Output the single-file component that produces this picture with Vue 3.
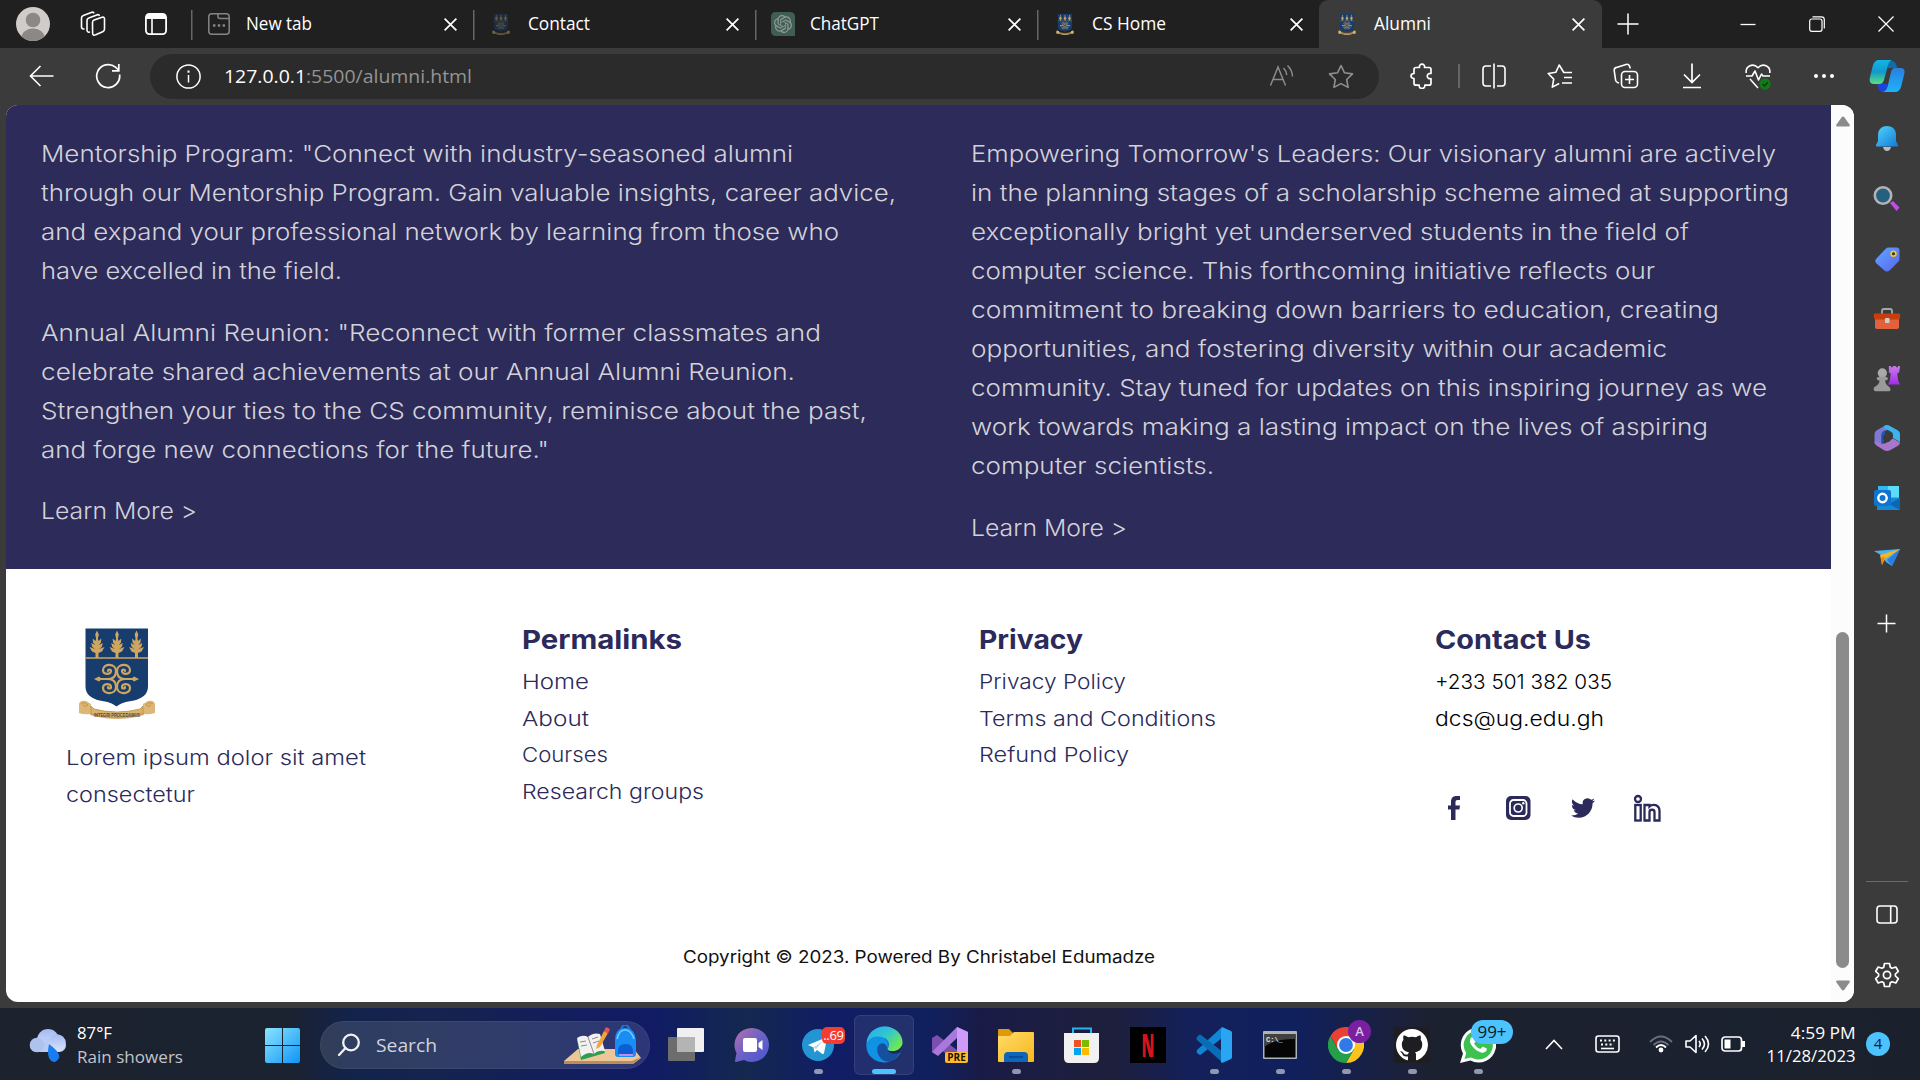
<script setup>
// Stretches a line of text horizontally to the given width in pixels.
const vFit = {
  mounted(el, { value }) {
    const w = el.getBoundingClientRect().width
    if (w) el.style.transform = `scaleX(${value / w})`
  }
}

const tabs = [
  { title: 'New tab', w: 66, icon: 'page' },
  { title: 'Contact', w: 62, icon: 'crest', dim: true },
  { title: 'ChatGPT', w: 69, icon: 'gpt' },
  { title: 'CS Home', w: 74, icon: 'crest' },
  { title: 'Alumni', w: 57, icon: 'crest', active: true }
]

const mentorship = [
  ['Mentorship Program: "Connect with industry-seasoned alumni', 752],
  ['through our Mentorship Program. Gain valuable insights, career advice,', 855],
  ['and expand your professional network by learning from those who', 798],
  ['have excelled in the field.', 301]
]
const reunion = [
  ['Annual Alumni Reunion: "Reconnect with former classmates and', 780],
  ['celebrate shared achievements at our Annual Alumni Reunion.', 754],
  ['Strengthen your ties to the CS community, reminisce about the past,', 826],
  ['and forge new connections for the future."', 508]
]
const leaders = [
  ["Empowering Tomorrow's Leaders: Our visionary alumni are actively", 805],
  ['in the planning stages of a scholarship scheme aimed at supporting', 818],
  ['exceptionally bright yet underserved students in the field of', 718],
  ['computer science. This forthcoming initiative reflects our', 684],
  ['commitment to breaking down barriers to education, creating', 748],
  ['opportunities, and fostering diversity within our academic', 696],
  ['community. Stay tuned for updates on this inspiring journey as we', 796],
  ['work towards making a lasting impact on the lives of aspiring', 737],
  ['computer scientists.', 243]
]
const columns = [
  { head: 'Permalinks', w: 160, links: [['Home', 67], ['About', 67], ['Courses', 86], ['Research groups', 182]] },
  { head: 'Privacy', w: 104, links: [['Privacy Policy', 147], ['Terms and Conditions', 237], ['Refund Policy', 150]] }
]
</script>

<template>
  <div class="desktop">
    <svg class="defs" width="0" height="0" aria-hidden="true">
      <defs>
        <symbol id="crest" viewBox="0 0 76 92">
          <path d="M6.500 0.500h62.500v58c0 8-6 12-14 14-8 1-14 3-17.500 6-3.500-3-9-5-17-6-8-2-14-6-14-14z" fill="#163d6e" />
          <path d="M6.500 30h62.500" stroke="#cfa65f" stroke-width="1.400" />
          <g v-for="x in [18, 38, 57.500]" :key="x" :transform="`translate(${x} 0)`" fill="#cfa65f">
            <path d="M0 2.500l1.800 4-.9 4 .6 2.500 2.800-2.500-.3 4-2.200 2.500 4-2-1 4-2.800 2 5.500-2-2.500 4.500-3.500 1.500v5h-3v-5l-3.500-1.500-2.500-4.500 5.500 2-2.800-2-1-4 4 2-2.200-2.500-.3-4 2.800 2.500.6-2.500-.9-4z" />
          </g>
          <g fill="none" stroke="#cfa65f" stroke-width="2.200" stroke-linecap="round">
            <path d="M18 51h11c6 0 8-4 8-8 0-8-13-8-13-1 0 5 8 5 8 1 0-2-3-2-3 0" />
            <path d="M57 51h-11c-6 0-8-4-8-8 0-8 13-8 13-1 0 5-8 5-8 1 0-2 3-2 3 0" />
            <path d="M18 51h11c6 0 8 4 8 8 0 8-13 8-13 1 0-5 8-5 8-1 0 2-3 2-3 0" />
            <path d="M57 51h-11c-6 0-8 4-8 8 0 8 13 8 13 1 0-5-8-5-8-1 0 2 3 2 3 0" />
          </g>
          <path d="M15 51l5-2.500 3 2.500-3 2.500zM60 51l-5-2.500-3 2.500 3 2.500z" fill="#cfa65f" />
          <path d="M0 76q1-4 7-3l5 3v9q16 3 26 3t26-3v-9l5-3q6-1 7 3v9q-6 2-11 1v1q-13 4-27 4t-27-4v-1q-6 1-11-1z" fill="#dcb775" />
          <path d="M7 79h5v-3l7 4q18 4 38 0l7-4v3h5" fill="none" stroke="#fff" stroke-width="0" />
          <path d="M2 76q4-3 7 1-3 3-5 0M74 76q-4-3-7 1 3 3 5 0M12 78l3 3q23 6 46 0l3-3v8q-26 7-52 0z" fill="#d9b26c" stroke="#b98f4c" stroke-width=".8" />
          <text x="38" y="88.500" text-anchor="middle" font-family="Liberation Sans, sans-serif" font-weight="700" font-size="5.800" textLength="46" lengthAdjust="spacingAndGlyphs" fill="#4b4a4d">INTEGRI PROCEDAMUS</text>
        </symbol>
        <linearGradient id="gBlue" x1="0" y1="0" x2="1" y2="1"><stop stop-color="#4fd5fb" /><stop offset="1" stop-color="#1479d8" /></linearGradient>
        <linearGradient id="gTeal" x1="0" y1="0" x2="0" y2="1"><stop stop-color="#12b5e8" /><stop offset=".5" stop-color="#1199c9" /><stop offset="1" stop-color="#5fe07c" /></linearGradient>
        <linearGradient id="gSky" x1="0" y1="0" x2="0" y2="1"><stop stop-color="#2a7fe0" /><stop offset="1" stop-color="#1db4fb" /></linearGradient>
        <linearGradient id="gTag" x1="0" y1="0" x2="1" y2="1"><stop stop-color="#5fa8ff" /><stop offset="1" stop-color="#5a63f0" /></linearGradient>
        <linearGradient id="gWin" x1="0" y1="0" x2="1" y2="1"><stop stop-color="#8be4ff" /><stop offset="1" stop-color="#0f95f5" /></linearGradient>
        <linearGradient id="gChat" x1="0" y1="0" x2="1" y2="1"><stop stop-color="#b86fae" /><stop offset=".5" stop-color="#6a62c4" /><stop offset="1" stop-color="#4b55d4" /></linearGradient>
        <linearGradient id="gEdge" x1="0" y1="0" x2="1" y2=".7"><stop stop-color="#2ea9f0" /><stop offset=".5" stop-color="#2fc5d2" /><stop offset="1" stop-color="#74ea48" /></linearGradient>
        <linearGradient id="gFold" x1="0" y1="0" x2="1" y2="1"><stop stop-color="#ffdb69" /><stop offset="1" stop-color="#f9b71c" /></linearGradient>
        <linearGradient id="gPurp" x1="0" y1="0" x2="0" y2="1"><stop stop-color="#c97be8" /><stop offset="1" stop-color="#a22be8" /></linearGradient>
        <linearGradient id="gCloud" x1="0" y1="0" x2="0" y2="1"><stop stop-color="#a3baf4" /><stop offset="1" stop-color="#dbe5f8" /></linearGradient>
      </defs>
    </svg>

    <!-- Tab strip -->
    <header class="tabstrip">
      <div class="lead">
        <svg class="avatar" viewBox="0 0 34 34" width="34" height="34"><defs><clipPath id="avc"><circle cx="17" cy="17" r="17" /></clipPath></defs><g clip-path="url(#avc)"><rect width="34" height="34" fill="#cfccc9" /><circle cx="17" cy="13" r="7.300" fill="#8c8885" /><ellipse cx="17" cy="32" rx="12" ry="10.500" fill="#8c8885" /></g></svg>
        <svg class="ws" viewBox="0 0 26 26" width="26" height="26" fill="none" stroke="#fff" stroke-width="1.600" stroke-linejoin="round"><path d="M12.500 11.500q0-1.800 1.600-2.400l8-2.800q2.400-.8 2.400 1.700v10q0 2-1.800 2.800l-7 3q-3 1.200-3.100-1.500z" /><path d="M10 21l-1.500.2Q7 21 7 19V9.500q0-2 1.800-2.600l8-3q2-.8 2.700 1" /><path d="M4.500 18l-1 0Q1.500 17.800 1.500 16V7q0-2 1.800-2.600l8-3q2-.8 2.700 1" /></svg>
        <svg class="ta" viewBox="0 0 22 22" width="22" height="22"><rect x=".9" y=".9" width="20.200" height="20.200" rx="3.500" fill="none" stroke="#fff" stroke-width="1.800" /><path d="M1 6V4q0-3 3-3h14q3 0 3 3v2z" fill="#fff" /><path d="M7 6v15" stroke="#fff" stroke-width="1.600" /></svg>
      </div>
      <div v-for="t in tabs" :key="t.title" class="tab" :class="{ active: t.active }">
        <span class="tabicon" :class="{ dim: t.dim }">
          <svg v-if="t.icon === 'crest'" width="20" height="21"><use href="#crest" /></svg>
          <svg v-else-if="t.icon === 'gpt'" width="24" height="24" viewBox="0 0 24 24"><path d="M5 0h14q5 0 5 5v19H5q-5 0-5-5V5q0-5 5-5z" fill="#405e55" /><path transform="translate(3 3) scale(.75)" fill="#8f9d97" d="M22.2819 9.8211a5.9847 5.9847 0 0 0-.5157-4.9108 6.0462 6.0462 0 0 0-6.5098-2.9A6.0651 6.0651 0 0 0 4.9807 4.1818a5.9847 5.9847 0 0 0-3.9977 2.9 6.0462 6.0462 0 0 0 .7427 7.0966 5.98 5.98 0 0 0 .511 4.9107 6.051 6.051 0 0 0 6.5146 2.9001A5.9847 5.9847 0 0 0 13.2599 24a6.0557 6.0557 0 0 0 5.7718-4.2058 5.9894 5.9894 0 0 0 3.9977-2.9001 6.0557 6.0557 0 0 0-.7475-7.0729zm-9.022 12.6081a4.4755 4.4755 0 0 1-2.8764-1.0408l.1419-.0804 4.7783-2.7582a.7948.7948 0 0 0 .3927-.6813v-6.7369l2.02 1.1686a.071.071 0 0 1 .038.052v5.5826a4.504 4.504 0 0 1-4.4945 4.4944zm-9.6607-4.1254a4.4708 4.4708 0 0 1-.5346-3.0137l.142.0852 4.783 2.7582a.7712.7712 0 0 0 .7806 0l5.8428-3.3685v2.3324a.0804.0804 0 0 1-.0332.0615L9.74 19.9502a4.4992 4.4992 0 0 1-6.1408-1.6464zM2.3408 7.8956a4.485 4.485 0 0 1 2.3655-1.9728V11.6a.7664.7664 0 0 0 .3879.6765l5.8144 3.3543-2.0201 1.1685a.0757.0757 0 0 1-.071 0l-4.8303-2.7865A4.504 4.504 0 0 1 2.3408 7.872zm16.5963 3.8558L13.1038 8.364 15.1192 7.2a.0757.0757 0 0 1 .071 0l4.8303 2.7913a4.4944 4.4944 0 0 1-.6765 8.1042v-5.6772a.79.79 0 0 0-.407-.667zm2.0107-3.0231l-.142-.0852-4.7735-2.7818a.7759.7759 0 0 0-.7854 0L9.409 9.2297V6.8974a.0662.0662 0 0 1 .0284-.0615l4.8303-2.7866a4.4992 4.4992 0 0 1 6.6802 4.66zM8.3065 12.863l-2.02-1.1638a.0804.0804 0 0 1-.038-.0567V6.0742a4.4992 4.4992 0 0 1 7.3757-3.4537l-.142.0805L8.704 5.459a.7948.7948 0 0 0-.3927.6813zm1.0976-2.3654l2.602-1.4998 2.6069 1.4998v2.9994l-2.5974 1.4997-2.6067-1.4997Z" /></svg>
          <svg v-else width="22" height="22" viewBox="0 0 22 22" fill="none" stroke="#858585" stroke-width="1.500"><rect x=".8" y=".8" width="20.400" height="20.400" rx="3" /><path d="M10 1v2.500q0 2 2 2h9" /><path d="M5 12.500h2.400M9.800 12.500h2.400M14.600 12.500H17" stroke-width="2.600" /></svg>
        </span>
        <span class="tabtitle"><span v-fit="t.w" class="fit">{{ t.title }}</span></span>
        <svg class="tabx" width="13" height="13" viewBox="0 0 13 13" stroke="#fff" stroke-width="1.700"><path d="M.6 .6l11.800 11.800M12.400 .6L.6 12.400" /></svg>
      </div>
      <div class="wincontrols">
        <svg width="22" height="22" viewBox="0 0 22 22" stroke="#fff" stroke-width="1.500"><path d="M11 .5v21M.5 11h21" /></svg>
        <svg class="min" width="16" height="16" viewBox="0 0 16 16" stroke="#fff" stroke-width="1.300"><path d="M.5 8.500h15" /></svg>
        <svg width="16" height="16" viewBox="0 0 16 16" fill="none" stroke="#fff" stroke-width="1.200"><rect x=".7" y="3" width="12.300" height="12.300" rx="2" /><path d="M3.500 .8h9q2.800 0 2.800 2.800v9" /></svg>
        <svg width="16" height="16" viewBox="0 0 16 16" stroke="#fff" stroke-width="1.300"><path d="M.5 .5l15 15M15.500 .5l-15 15" /></svg>
      </div>
    </header>

    <!-- Toolbar -->
    <div class="toolbar">
      <svg class="back" width="25" height="22" viewBox="0 0 25 22" fill="none" stroke="#fff" stroke-width="1.600"><path d="M24.500 11H1.500M11.500 1l-10 10 10 10" /></svg>
      <svg class="reload" width="26" height="26" viewBox="0 0 26 26" fill="none" stroke="#fff" stroke-width="1.700"><path d="M24.600 11.500A11.500 11.500 0 1 1 20.500 4.200L23.500 7" /><path d="M23.800 1v6.800H17" /></svg>
      <div class="omnibox">
        <svg width="25" height="25" viewBox="0 0 25 25" fill="none" stroke="#fff" stroke-width="1.500"><circle cx="12.500" cy="12.500" r="11.600" /><path d="M12.500 11v7.500" /><path d="M12.500 6.500v2.200" stroke-width="2" /></svg>
        <span class="url"><span v-fit="248" class="fit"><b>127.0.0.1</b>:5500/alumni.html</span></span>
        <svg class="read" width="26" height="24" viewBox="0 0 26 24" fill="none" stroke="#8c8c8c" stroke-width="1.500"><path d="M1.500 21.500L9 3l7.500 18.500M4 15.500h10" /><path d="M14.500 4q3 3 3.200 7M18.500 1.500q5 5 5 11" /></svg>
        <svg width="26" height="25" viewBox="0 0 26 25" fill="none" stroke="#8f8f8f" stroke-width="1.600" stroke-linejoin="round"><path d="M13 1.500l3.500 7.300 8 1.100-5.800 5.600 1.400 7.900-7.100-3.800-7.100 3.800 1.400-7.900L1.500 9.900l8-1.100z" /></svg>
      </div>
      <div class="actions">
        <span class="cell puzzle"><svg width="24" height="26" viewBox="0 0 24 26" fill="none" stroke="#fff" stroke-width="1.700" stroke-linejoin="round"><path d="M6 4.500h3.500C8.500 0 15.500 0 14.500 4.500H19q2 0 2 2v4c-5-.8-5 6 0 5.200v4.500q0 2-2 2h-4.200c.7 4.300-6.300 4.300-5.600 0H6q-2 0-2-2v-4.700C0 15.500 0 10.500 4 10.500v-4q0-2 2-2z" /></svg></span>
        <i class="bar"></i>
        <span class="cell split"><svg width="26" height="26" viewBox="0 0 26 26" fill="none" stroke="#fff" stroke-width="1.600"><path d="M10 3H5Q2 3 2 6v14q0 3 3 3h5M16 3h5q3 0 3 3v14q0 3-3 3h-5M13 .5v25" /></svg></span>
        <span class="cell"><svg width="26" height="26" viewBox="0 0 26 26" fill="none" stroke="#fff" stroke-width="1.600" stroke-linejoin="round"><path d="M25 9.500h-8.200L12.200 2 8.800 9.300l-7.600 1.200 5.500 5.600-1.400 8 6.900-3.600M17 14.500h8M15 20h10" /></svg></span>
        <span class="cell"><svg width="26" height="26" viewBox="0 0 26 26" fill="none" stroke="#fff" stroke-width="1.600"><rect x="8.500" y="8.500" width="16" height="16" rx="3.500" /><path d="M16.500 12v9M12 16.500h9M6 20l-1-.3q-2-.4-2.400-2.500L1.200 7.500Q1 5 3.500 4.400l9.500-3q2.500-.8 3.500 1.700l.8 2.400" /></svg></span>
        <span class="cell"><svg width="22" height="26" viewBox="0 0 22 26" fill="none" stroke="#fff" stroke-width="1.700"><path d="M11 .5V19M3 11.500l8 8 8-8M2 24.500h18" /></svg></span>
        <span class="cell"><svg width="26" height="27" viewBox="0 0 26 27" fill="none" stroke="#fff" stroke-width="1.600" stroke-linejoin="round"><path d="M1.200 10C.3 3 8-.5 13 4.700 18 -.5 25.700 3 24.800 10M1 13h6l3-5 3.500 9 3-6 1.500 2h7M5 16l8 9" /><circle cx="20" cy="21" r="5.700" fill="#137a19" stroke="none" /><path d="M17.500 21l2 2 3.500-4" stroke="#0b3f0e" /></svg></span>
        <span class="cell"><svg width="22" height="6" viewBox="0 0 22 6" fill="#fff"><circle cx="3" cy="3" r="2" /><circle cx="11" cy="3" r="2" /><circle cx="19" cy="3" r="2" /></svg></span>
        <span class="cell copilot"><svg width="36" height="34" viewBox="0 0 36 34"><path d="M12 24l-4-1c1 6 2 10 6 10h8l-4-8z" fill="#1a45d8" /><path d="M22 2c4 0 5 2 6 7H20l-7 0 2-7z" fill="#0b6eae" /><path d="M10 1h13c-3 1-4 4-5 9l-3 11c-1 3-3 4-5 4H5c-4 0-5-3-4-7L4 6c1-3 3-5 6-5z" fill="url(#gTeal)" /><path d="M26 9h6c4 0 4 4 3 7l-3 12c-1 3-3 5-6 5H14c3-1 4-3 5-7l3-13c1-3 2-4 4-4z" fill="url(#gSky)" /></svg></span>
      </div>
    </div>

    <!-- Page and sidebar -->
    <div class="middle">
      <div class="viewport">
        <div class="page">
          <section class="programs">
            <div class="col left">
              <p><span v-for="l in mentorship" :key="l[0]" v-fit="l[1]" class="line">{{ l[0] }}</span></p>
              <p><span v-for="l in reunion" :key="l[0]" v-fit="l[1]" class="line">{{ l[0] }}</span></p>
              <p><span v-fit="156" class="line">Learn More &gt;</span></p>
            </div>
            <div class="col">
              <p><span v-for="l in leaders" :key="l[0]" v-fit="l[1]" class="line">{{ l[0] }}</span></p>
              <p><span v-fit="156" class="line">Learn More &gt;</span></p>
            </div>
          </section>
          <footer class="footer">
            <div class="fcols">
              <div class="fcol about">
                <svg class="crest" width="76" height="92"><use href="#crest" /></svg>
                <span v-fit="300" class="fline">Lorem ipsum dolor sit amet</span>
                <span v-fit="129" class="fline">consectetur</span>
              </div>
              <div v-for="c in columns" :key="c.head" class="fcol">
                <h3><span v-fit="c.w" class="fit">{{ c.head }}</span></h3>
                <span v-for="l in c.links" :key="l[0]" v-fit="l[1]" class="fline">{{ l[0] }}</span>
              </div>
              <div class="fcol contact">
                <h3><span v-fit="156" class="fit">Contact Us</span></h3>
                <span v-fit="177" class="fline">+233 501 382 035</span>
                <span v-fit="169" class="fline">dcs@ug.edu.gh</span>
                <div class="social">
                  <svg width="28" height="28" viewBox="0 0 28 28" fill="#2b2a5a"><path d="M11 26V15.500H8v-4h3V8c0-4 2-6 5.500-6H20v4h-2.300C16 6 15.500 6.800 15.500 8v3.500H20l-.6 4h-3.900V26z" /></svg>
                  <svg width="28" height="28" viewBox="0 0 28 28"><rect x="2" y="2" width="24.500" height="24" rx="5" fill="#2b2a5a" /><rect x="6" y="6" width="16.500" height="16" rx="3.500" fill="none" stroke="#fff" stroke-width="1.800" /><circle cx="14.200" cy="14" r="4" fill="none" stroke="#fff" stroke-width="1.700" /><circle cx="19.300" cy="9.200" r="1.200" fill="#fff" /></svg>
                  <svg width="28" height="28" viewBox="-2 -2 28 28" fill="#2b2a5a"><path d="M23.953 4.570a10 10 0 01-2.825.775 4.958 4.958 0 002.163-2.723c-.951.555-2.005.959-3.127 1.184a4.920 4.920 0 00-8.384 4.482C7.690 8.095 4.067 6.130 1.640 3.162a4.822 4.822 0 00-.666 2.475c0 1.710.87 3.213 2.188 4.096a4.904 4.904 0 01-2.228-.616v.06a4.923 4.923 0 003.946 4.827 4.996 4.996 0 01-2.212.085 4.936 4.936 0 004.604 3.417 9.867 9.867 0 01-6.102 2.105c-.39 0-.779-.023-1.170-.067a13.995 13.995 0 007.557 2.209c9.053 0 13.998-7.496 13.998-13.985 0-.21 0-.42-.015-.63A9.935 9.935 0 0024 4.590z" /></svg>
                  <svg width="28" height="28" viewBox="0 0 28 28" fill="none" stroke="#2b2a5a" stroke-width="2.300"><circle cx="5" cy="5" r="3" /><rect x="2.300" y="11" width="5.400" height="15.500" /><path d="M11.500 11h5v1.500c3-3 10-2 10 4.500v9.500h-5V18c0-3-5-3-5 0v8.500h-5z" /></svg>
                </div>
              </div>
            </div>
            <div class="copy"><span v-fit="472" class="fit">Copyright © 2023. Powered By Christabel Edumadze</span></div>
          </footer>
        </div>
        <div class="scroll">
          <svg width="14" height="11" viewBox="0 0 14 11"><path d="M5.500 1.500q1.500-2 3 0l5 7q1 2-1 2h-11q-2 0-1-2z" fill="#8b8b8b" /></svg>
          <div class="thumb"></div>
          <svg class="down" width="14" height="11" viewBox="0 0 14 11"><path d="M5.500 9.500q1.500 2 3 0l5-7q1-2-1-2h-11q-2 0-1 2z" fill="#8b8b8b" /></svg>
        </div>
      </div>
      <aside class="side">
        <div class="apps">
          <svg width="28" height="28" viewBox="0 0 28 28"><path d="M10 22h8q-1 4-4 4t-4-4z" fill="#b9bec4" /><path d="M14 1c6 0 9 4 9 9v6l2 4q.5 1.500-1 1.500H4q-1.500 0-1-1.500l2-4v-6c0-5 3-9 9-9z" fill="url(#gBlue)" /></svg>
          <svg width="28" height="28" viewBox="0 0 28 28"><path d="M17 18l3-2 6.500 6.500-3 3.500z" fill="#c44af0" /><circle cx="10" cy="10.500" r="8.200" fill="#24607f" stroke="#b3b3b3" stroke-width="2.600" /></svg>
          <svg width="28" height="28" viewBox="0 0 28 28"><path d="M15 2.500h8.500q3 0 3 3V14q0 1.500-1 2.500l-9 9q-2.500 2-5 0l-8-7q-2.500-2.500 0-5l9-9.500q1-1.500 2.500-1.500z" fill="url(#gTag)" /><circle cx="20.500" cy="8.800" r="2.400" fill="#213047" stroke="#f5c81c" stroke-width="1.700" /></svg>
          <svg width="28" height="28" viewBox="0 0 28 28"><path d="M9 9V6q0-2 2-2h6q2 0 2 2v3" fill="none" stroke="#a4a8aa" stroke-width="1.800" /><path d="M2 12h24v10q0 2-2 2H4q-2 0-2-2z" fill="#e2623c" /><path d="M1 8.500h26q1 6-2 6H3q-3 0-2-6z" fill="#c83d0c" /><rect x="12" y="13" width="4.500" height="5" rx="1" fill="#d0d0d0" /></svg>
          <svg width="30" height="30" viewBox="0 0 30 30"><path d="M17 1l2 0 1 2 2-2h2l2 2 1-2 2 0-1 7-2 1 1 8 2 4H16l2-4 1-8-2-1z" fill="url(#gPurp)" /><circle cx="10" cy="8.500" r="5" fill="#a9a9a9" /><path d="M4 14.500q0-2 3-2h6q3 0 3 2t-3 2.200q0 4.300 5 7.300 2 4-1 4H3q-3 0-2-4 6-3 6-7.300-3 0-3-2.200z" fill="#9a9a9a" /></svg>
          <svg width="28" height="28" viewBox="0 0 28 28"><path d="M13 1L3.500 6.500Q1.500 7.500 1.500 10v9l7 3.500V11q0-2 2-3l5-3z" fill="#7f78d6" /><path d="M11 2q3-2 6 0l8 4.500q2 1 2 3.500v8l-7-4v-3q0-2-1.500-3L11 4z" fill="#3cb2ee" /><path d="M1.500 18l7 1.500 3.500 0 8-5 7 4q0 2-2 3.200l-8 4.500q-3 1.500-6 0L3.500 21.500q-2-1-2-3.500z" fill="#a877cb" /><path d="M8.500 20.500V10.500q0-2 1.500-3L12 6V16z" fill="#2458b0" /><circle cx="14" cy="14" r="4.300" fill="#3b3b3b" /></svg>
          <svg width="28" height="26" viewBox="0 0 28 26"><rect x="5" y="1" width="21" height="21" fill="#34b8ee" /><rect x="15" y="1" width="11" height="11" fill="#5bdcfa" /><path d="M4 13h23v12H4z" fill="#1787d8" /><path d="M27 13v12l-11-6z" fill="#0c67b0" /><rect x="1" y="5" width="17" height="16" rx="2" fill="#0f74cf" /><circle cx="9.500" cy="13" r="4.200" fill="none" stroke="#fff" stroke-width="2.400" /></svg>
          <svg width="28" height="28" viewBox="0 0 28 28"><path d="M1 7l26-2-8 17-6-4-5-7z" fill="#4bb2f3" /><path d="M27 5L14 16l5 6z" fill="#2b7de0" /><path d="M27 5L7 11l2 10 3-6z" fill="#f6b61e" /><path d="M9 21l-1-7 4-1z" fill="#e8801c" /></svg>
          <svg class="add" width="20" height="19" viewBox="0 0 20 19" stroke="#fff" stroke-width="1.500"><path d="M9.500 .5v18M.5 9.500h18" /></svg>
        </div>
        <div class="sidebottom">
          <svg width="22" height="19" viewBox="0 0 22 19" fill="none" stroke="#fff" stroke-width="1.600"><rect x="1" y="1" width="20" height="17" rx="3" /><path d="M14.700 1v17" /></svg>
          <svg width="26" height="26" viewBox="0 0 26 26" fill="none" stroke="#fff" stroke-width="1.700" stroke-linejoin="round"><path d="M10.500 1.500h5l.8 3.700 1.700 1 3.800-1.200 2.500 4.300-2.900 2.700v2l2.900 2.700-2.500 4.300-3.800-1.200-1.700 1-.8 3.700h-5l-.8-3.700-1.700-1L4.200 21l-2.500-4.300 2.900-2.700v-2L1.700 9.300 4.200 5 8 6.200l1.700-1z" /><circle cx="13" cy="13" r="3.600" /></svg>
        </div>
      </aside>
    </div>

    <!-- Taskbar -->
    <div class="taskbar">
      <div class="weather">
        <svg width="38" height="36" viewBox="0 0 38 36"><circle cx="19" cy="13" r="11" fill="url(#gCloud)" /><rect x="1" y="12" width="36" height="13" rx="6.500" fill="#b8cbf5" /><circle cx="8" cy="18" r="7.300" fill="#aec2ee" /><circle cx="28" cy="16" r="8.800" fill="url(#gCloud)" /><path d="M20 17q12 9 10 14-5 8-10 0-2-5 0-14z" fill="#1a7cf2" /></svg>
        <div class="wtext"><div><span v-fit="35" class="fit">87°F</span></div><div class="sub"><span v-fit="106" class="fit">Rain showers</span></div></div>
      </div>
      <svg class="start" width="35" height="35" viewBox="0 0 35 35" fill="url(#gWin)"><path d="M2 0h15v17H0V2q0-2 2-2zM18 0h15q2 0 2 2v15H18zM0 18h17v17H2q-2 0-2-2zM18 18h17v15q0 2-2 2H18z" /></svg>
      <div class="search">
        <svg width="24" height="24" viewBox="0 0 24 24" fill="none" stroke="#f2f2f4" stroke-width="2.300"><circle cx="14" cy="9.500" r="7.800" /><path d="M8.500 15L2 22" stroke-linecap="round" /></svg>
        <span class="stext"><span v-fit="61" class="fit">Search</span></span>
        <svg class="art" width="78" height="40" viewBox="0 0 78 40"><path d="M0 36L14 24h56l7 9-8 6H0z" fill="#edc797" /><path d="M0 36h68l9-4-8 7H0z" fill="#b98d5e" /><path d="M13 15l22-5 6 18-24 7z" fill="#2f9b53" /><path d="M13 13q6-4 11-1 5-5 12-3l5 17q-7-1-11 3-6-3-13 3z" fill="#f2f1ef" /><path d="M24 12l6 17M16 17l6-1M17 21l6-1M28 14l6-2M29 18l6-2" stroke="#8b8b98" stroke-width="1" /><path d="M33 20l7-14 4 2-8 14-4 2z" fill="#f4a43a" /><path d="M40 6l2-4 4 2-2 5z" fill="#e8554e" /><path d="M57 5q1-5 4-5t5 5" fill="none" stroke="#1679db" stroke-width="2" /><path d="M51 16q0-13 10-13t11 13v13q0 3-3 3H54q-3 0-3-3z" fill="#1a8df5" /><path d="M53 14q2-9 8-9t9 9" stroke="#6fd0ff" fill="none" stroke-width="1.500" /><path d="M54 29v-3q0-7 7.500-7t7.500 7v3z" fill="#0c5fd2" /><path d="M55 30h14" stroke="#c389f2" stroke-width="2" /></svg>
      </div>
      <div class="dock">
        <span class="app"><svg width="36" height="36" viewBox="0 0 36 36"><rect x="9" y="1" width="27" height="24" rx="1" fill="#f0f0f0" /><rect x="0" y="10" width="27" height="24" rx="1" fill="#6d6d6d" /><path d="M9 10h18v15H9z" fill="#b4b4b4" /></svg></span>
        <span class="app"><svg width="36" height="36" viewBox="0 0 36 36"><path d="M18 1a17 17 0 1 1-8 32l-8 2q-1 0-1-1l1.500-8A17 17 0 0 1 18 1z" fill="url(#gChat)" /><rect x="9" y="11" width="14" height="14" rx="2" fill="#fff" /><path d="M24.500 16l4-3v10l-4-3z" fill="#fff" /></svg></span>
        <span class="app run"><svg width="36" height="36" viewBox="0 0 36 36"><circle cx="18" cy="18" r="16" fill="#2495d3" /><path d="M8 18l18-7.500q1.500-.3 1 1.500L24 26q-.5 1.500-2 .7l-5-3.700-2.500 2.500-1-5z" fill="#fff" /><path d="M13.500 20.500L23 14l-7 8z" fill="#b3d9ef" /></svg><em class="badge red">..69</em></span>
        <span class="app run open"><svg width="37" height="37" viewBox="0 0 36 36"><circle cx="18" cy="18" r="17.500" fill="#1378ce" /><path d="M.5 17C1 7 9 .5 18 .5c11 0 17.500 8 17.500 15 0 6-4.500 9-10 9-3 0-5-1-4-3 2-3 1-9-5-10C9 10.500 2 14 .5 17z" fill="url(#gEdge)" /><path d="M.5 18C2 12 8 9 14 10.500c6 1.500 8 6 7 10l-.5 1C20 15 11 15 11 23c0 6 6 12.500 12 11.500C12 38-.5 30 .5 18z" fill="#0f91e4" /><path d="M11 23c0-7 8-8 9.500-2-1 4 6 7 13 3-3 8-9 10.500-12 10.500C15 34.500 11 28 11 23z" fill="#174f9f" /><path d="M21 21.500c-1 2 1 3 4.500 3 5 0 9-3 10-7 .3 3-.7 6-2 8-6 3-14 1-12.500-4z" fill="#1e2a5e" /></svg></span>
        <span class="app"><svg width="36" height="36" viewBox="0 0 36 36"><path d="M0 11l5-3 20 15v12L5 20v8l-5-3z" fill="#7a4fae" /><path d="M25 0l11 5v26l-11 5V11L6 29l-6-4z" fill="#a878dd" /><path d="M25 0l11 5v26l-11 5z" fill="#cf9bfb" /></svg><em class="badge pre">PRE</em></span>
        <span class="app run"><svg width="36" height="36" viewBox="0 0 36 36"><path d="M0 3q0-1 1-1h10l4 4H35v9H0z" fill="#de9a07" /><path d="M0 9h12l4-4h19q1 0 1 1v28q0 1-1 1H1q-1 0-1-1z" fill="url(#gFold)" /><path d="M6 35v-6q0-4 4-4h16q4 0 4 4v6z" fill="#0d66b8" /><path d="M11 30h14" stroke="#07468c" stroke-width="1.600" /></svg></span>
        <span class="app"><svg width="36" height="36" viewBox="0 0 36 36"><path d="M9 8V1.500h18V8" fill="none" stroke="#28b4ef" stroke-width="2" /><path d="M0 6h35v25q0 5-5 5H5q-5 0-5-5z" fill="#f1f1f1" /><path d="M10 13h7v7h-7z" fill="#f25022" /><path d="M18 13h7v7h-7z" fill="#7fba00" /><path d="M10 21h7v7h-7z" fill="#00a4ef" /><path d="M18 21h7v7h-7z" fill="#ffb900" /></svg></span>
        <span class="app"><i class="netflix"><b>N</b></i></span>
        <span class="app run"><svg width="36" height="36" viewBox="0 0 36 36"><path d="M26 0L1 23q-1 1.500 0 3l2 1.500q1 .7 2 0L26 11z" fill="#0f87d4" /><path d="M1 10l2-2q1-.7 2 0L27 25v11L1 13q-1-1.500 0-3z" fill="#0a6cb4" /><path d="M26 0l9 4q1 .5 1 2v24q0 1.500-1 2l-9 4q-1.500-1-1-2V3z" fill="#29a5f2" /></svg></span>
        <span class="app run"><svg width="34" height="28" viewBox="0 0 34 28"><rect width="34" height="28" rx="1" fill="#aeb3b8" /><rect x="1.500" y="3" width="31" height="23.500" fill="#050505" /><path d="M1.500 3h31v5q-22 0-31 8z" fill="#414141" /><text x="3" y="10.500" font-family="Liberation Mono, monospace" font-size="7" font-weight="700" fill="#e5e5e5">C:\_</text></svg></span>
        <span class="app run"><svg width="36" height="36" viewBox="0 0 36 36"><path d="M2.400 9A18 18 0 0 1 33.600 9H18z" fill="#e94235" /><path d="M33.600 9A18 18 0 0 1 18 36l7.800-13.500L18 9z" fill="#fcc31e" /><path d="M18 36A18 18 0 0 1 2.400 9l7.800 13.500L25.800 22.500z" fill="#269f4b" /><path d="M2.400 9l7.800 13.500L18 9z" fill="#e94235" /><circle cx="18" cy="18" r="9" fill="#fff" /><circle cx="18" cy="18" r="6.900" fill="#2f79ea" /></svg><em class="badge acc">A</em></span>
        <span class="app run"><svg width="36" height="36" viewBox="0 0 36 36"><rect width="36" height="36" fill="#1d1d22" /><path transform="translate(2 2) scale(2)" fill="#fff" d="M8 0C3.580 0 0 3.580 0 8c0 3.540 2.290 6.530 5.470 7.590.4.070.55-.17.55-.38 0-.19-.01-.82-.01-1.490-2.010.37-2.530-.49-2.690-.94-.09-.23-.48-.94-.82-1.130-.28-.15-.68-.52-.01-.53.63-.01 1.080.58 1.230.82.72 1.210 1.870.87 2.330.66.070-.52.28-.87.51-1.070-1.780-.2-3.640-.89-3.640-3.950 0-.87.31-1.590.82-2.150-.08-.2-.36-1.020.08-2.120 0 0 .67-.21 2.200.82.64-.18 1.320-.27 2-.27s1.360.09 2 .27c1.530-1.040 2.200-.82 2.200-.82.44 1.100.16 1.920.08 2.120.51.56.82 1.270.82 2.150 0 3.070-1.870 3.750-3.650 3.950.29.25.54.73.54 1.480 0 1.070-.01 1.930-.01 2.200 0 .21.15.46.55.38A8.010 8.010 0 0016 8c0-4.420-3.580-8-8-8z" /></svg></span>
        <span class="app run"><svg width="36" height="36" viewBox="0 0 36 36"><path d="M18.500.5a17.500 17.500 0 1 1-8 33L0 36l3-9.500A17.500 17.500 0 0 1 18.500.5z" fill="#fff" /><path d="M18.500 3.500a14.500 14.500 0 1 1-7.500 27L4.500 32l1.700-6A14.500 14.500 0 0 1 18.500 3.500z" fill="#3dc251" /><path transform="translate(1.500 1) scale(1.400)" fill="#fff" d="M17.472 14.382c-.297-.149-1.758-.867-2.030-.967-.273-.099-.471-.148-.67.15-.197.297-.767.966-.94 1.164-.173.199-.347.223-.644.075-.297-.15-1.255-.463-2.390-1.475-.883-.788-1.480-1.761-1.653-2.059-.173-.297-.018-.458.13-.606.134-.133.298-.347.446-.52.149-.174.198-.298.298-.497.099-.198.05-.371-.025-.52-.075-.149-.669-1.612-.916-2.207-.242-.579-.487-.5-.669-.51-.173-.008-.371-.01-.57-.01-.198 0-.52.074-.792.372-.272.297-1.040 1.016-1.040 2.479 0 1.462 1.065 2.875 1.213 3.074.149.198 2.096 3.200 5.077 4.487.709.306 1.262.489 1.694.625.712.227 1.360.195 1.871.118.571-.085 1.758-.719 2.006-1.413.248-.694.248-1.289.173-1.413-.074-.124-.272-.198-.57-.347" /></svg><em class="badge wa">99+</em></span>
      </div>
      <div class="tray">
        <svg width="18" height="11" viewBox="0 0 18 11" fill="none" stroke="#fff" stroke-width="1.600"><path d="M1 10l8-8.500 8 8.500" /></svg>
        <svg class="kb" width="25" height="18" viewBox="0 0 25 18" fill="none" stroke="#fff" stroke-width="1.600"><rect x="1" y="1" width="23" height="16" rx="2.500" /><path d="M5 5.500h15M6 9.500h13" stroke-width="2" stroke-dasharray="2 2.300" /><path d="M6 13.500h13" /></svg>
        <svg class="wifi" width="24" height="18" viewBox="0 0 24 18" fill="none" stroke-width="1.800"><path d="M1 7Q12-4 23 7M4.500 10q7.500-7 15 0" stroke="#697079" /><path d="M7 12.500q5-5 10 0" stroke="#fff" /><circle cx="12" cy="15" r="2.400" fill="#fff" /></svg>
        <svg class="vol" width="25" height="20" viewBox="0 0 25 20" fill="none" stroke="#fff" stroke-width="1.600"><path d="M1 7h4l6-5.500v17L5 13H1z" stroke-linejoin="round" /><path d="M14 7q2.500 3 0 6M17 4.500q5 5.500 0 11M20 2q7 8 0 16" /></svg>
        <svg class="bat" width="25" height="16" viewBox="0 0 25 16" fill="none" stroke="#fff" stroke-width="1.700"><rect x="1" y="1" width="19.500" height="14" rx="3" /><path d="M22.500 5v6" stroke-width="3" /><rect x="3.500" y="3.500" width="6" height="9" fill="#fff" stroke="none" /></svg>
        <div class="clock"><div><span v-fit="65" class="fit right">4:59 PM</span></div><div><span v-fit="89" class="fit right">11/28/2023</span></div></div>
        <span class="notif">4</span>
      </div>
    </div>
  </div>
</template>

<style>
body { background: #3b3b3b; overflow: hidden; }
</style>

<style scoped>
.desktop { width: 1920px; height: 1080px; display: flex; flex-direction: column; background: #3b3b3b; font-family: "Open Sans", "Noto Sans", sans-serif; overflow: hidden; }
.desktop * { box-sizing: border-box; }
.defs { position: absolute; }
svg { display: block; flex: none; }
.fit { display: inline-block; white-space: nowrap; transform-origin: left center; }
.fit.right { transform-origin: right center; }

.tabstrip { height: 48px; flex: none; background: #202020; display: flex; align-items: center; }
.lead { width: 191px; flex: none; display: flex; align-items: center; padding-left: 16px; }
.ws { margin-left: 30px; }
.ta { margin-left: 39px; }
.tab { width: 282px; height: 48px; flex: none; display: flex; align-items: center; color: #fff; font-size: 17.500px; background: linear-gradient(#666, #666) 0 10px / 1.500px 30px no-repeat; }
.tab.active { background: #3b3b3b; border-radius: 9px 9px 0 0; width: 283px; }
.tabicon { width: 24px; margin-left: 16px; display: flex; justify-content: center; }
.dim { opacity: .45; }
.tabtitle { width: 198px; margin-left: 15px; line-height: 26px; margin-top: -3px; }
.tabx { margin-top: 1px; }
.wincontrols { display: flex; align-items: center; padding-left: 15px; margin-top: -1px; }
.wincontrols svg + svg { margin-left: 53px; }
.wincontrols svg + .min { margin-left: 100.500px; }

.toolbar { height: 57px; flex: none; display: flex; align-items: center; padding: 0 0 1px 29px; }
.reload { margin-left: 41px; }
.omnibox { width: 1229px; height: 45px; margin: 1px 0 0 29px; border-radius: 23px; background: #2b2b2b; display: flex; align-items: center; padding: 0 0 1px 26px; flex: none; }
.url { width: 1045px; margin-left: 23px; font-size: 19px; color: #949494; line-height: 30px; }
.url b { font-weight: 400; color: #fff; }
.read { margin-right: 33px; }
.actions { display: flex; align-items: center; padding-left: 1px; }
.cell { width: 66px; display: flex; justify-content: center; flex: none; }
.cell.puzzle { width: 78px; padding-left: 6px; }
.bar { width: 1.500px; height: 24px; background: #666; }
.cell.split { margin-left: 1px; }
.cell.copilot { width: 60px; }

.middle { height: 903px; flex: none; display: flex; padding-left: 6px; }
.viewport { width: 1848px; height: 897px; background: #fff; border-radius: 12px; overflow: hidden; display: flex; flex: none; }
.page { width: 1825px; flex: none; font-family: Inter, "Noto Sans", sans-serif; }
.programs { height: 464px; background: #2d2b59; color: #d3d2d8; display: flex; padding: 30px 0 0 35px; font-size: 23px; font-weight: 350; }
.col { width: 930px; flex: none; }
.col:last-child { width: 855px; }
.col p { margin: 0 0 22.500px; }
.line { display: block; width: max-content; white-space: nowrap; line-height: 39px; transform-origin: left center; }
.footer { height: 433px; color: #2b2a5a; }
.fcols { display: flex; padding: 48px 0 0 60px; height: 326px; }
.fcol { width: 456.300px; flex: none; }
.fcol.contact { width: 300px; }
.crest { margin: 11px 0 20px 12.500px; }
h3 { margin: 0; font-size: 26px; font-weight: 700; line-height: 46px; height: 47px; }
.fline { display: block; width: max-content; white-space: nowrap; transform-origin: left center; font-size: 20.300px; font-weight: 350; line-height: 36.600px; }
.contact .fline { color: #000; }
.social { display: flex; gap: 36.500px; margin: 57px 0 0 5px; }
.copy { height: 40px; line-height: 40px; width: 472px; margin: 42px 0 0 676.500px; color: #111; font-size: 17px; font-weight: 400; }
.scroll { width: 23px; background: #fcfcfc; display: flex; flex-direction: column; align-items: center; padding-top: 11px; }
.thumb { width: 13px; height: 336px; border-radius: 7px; background: #8b8b8b; margin-top: 505px; }
.down { margin-top: 12px; }

.side { width: 66px; display: flex; flex-direction: column; align-items: center; }
.apps { height: 776px; display: flex; flex-direction: column; align-items: center; padding-top: 4px; }
.apps svg { margin: 16px 0 15.900px; height: 28px; }
.apps .add { height: 19px; margin-top: 26px; }
.sidebottom { width: 42px; border-top: 1.500px solid #6b6b6b; display: flex; flex-direction: column; align-items: center; gap: 38px; padding-top: 23px; }

.taskbar { height: 72px; flex: none; display: flex; align-items: center; background: linear-gradient(90deg, #1c222e 0, #1b2230 290px, #12234c 350px, #152350 440px, #101b64 650px, #14284f 745px, #101d65 830px, #10205e 930px, #191b47 980px, #1e1f3b 1110px, #14205a 1190px, #10205e 1290px, #182045 1370px, #1c2130 1430px, #1a212d 1920px); color: #fff; }
.weather { display: flex; width: 236px; padding: 2px 0 0 29px; align-items: center; flex: none; }
.wtext { margin-left: 10px; font-size: 17px; line-height: 24px; }
.wtext > div { height: 24px; }
.sub { color: #c2c5cb; }
.start { margin: 3px 0 0 29px; }
.search { width: 330px; height: 48px; margin: 2px 0 0 20px; border-radius: 24px; background: rgba(255, 255, 255, .12); border: 1px solid rgba(255, 255, 255, .06); display: flex; align-items: center; padding-left: 16px; flex: none; }
.stext { width: 188px; margin-left: 15px; font-size: 18.500px; line-height: 28px; color: #d1d4de; }
.dock { display: flex; margin: 1px 0 0 6px; height: 60px; flex: none; }
.app { width: 60px; margin-right: 6px; height: 60px; display: flex; align-items: center; justify-content: center; position: relative; border-radius: 6px; }
.app.run::after { content: ""; position: absolute; left: 25.500px; bottom: 1px; width: 9px; height: 5px; border-radius: 3px; background: #9296ae; }
.app.open { background: rgba(255, 255, 255, .08); border: 1px solid rgba(255, 255, 255, .08); }
.app.open::after { left: 17px; width: 24px; bottom: 0; background: #4cc2ff; }
.badge { position: absolute; font-style: normal; text-align: center; }
.red { left: 34px; top: 12px; width: 23px; height: 17px; line-height: 17px; border-radius: 5px; background: #f23c34; font-size: 13px; letter-spacing: -.3px; }
.pre { left: 25px; top: 37px; width: 23px; height: 11px; line-height: 11px; border-radius: 2px; background: #fdbb2c; color: #1a1206; font-size: 10px; font-weight: 700; }
.acc { left: 32px; top: 5px; width: 23px; height: 23px; line-height: 23px; border-radius: 12px; background: #7a1fa2; color: #dcc3e6; font-size: 13px; font-weight: 600; }
.wa { left: 23px; top: 5px; width: 42px; height: 24px; line-height: 23px; border-radius: 12px; background: #4cc2ff; color: #0b1a26; font-size: 17px; }
.netflix { width: 36px; height: 36px; background: #000; display: flex; align-items: center; justify-content: center; color: #d8131c; font-style: normal; font-size: 31px; line-height: 36px; }
.netflix b { font-weight: 800; transform: scaleX(.5); }
.tray { display: flex; align-items: center; margin-left: 31px; flex: none; }
.kb { margin-left: 32px; }
.wifi { margin-left: 29px; }
.vol { margin-left: 12px; }
.bat { margin-left: 11px; }
.clock { width: 89px; margin-left: 21px; font-size: 16.500px; line-height: 23px; text-align: right; display: flex; flex-direction: column; align-items: flex-end; }
.notif { margin-left: 10px; width: 24px; height: 24px; border-radius: 12px; background: #4cc2ff; color: #0d2030; font-size: 15px; line-height: 23px; text-align: center; }
</style>
